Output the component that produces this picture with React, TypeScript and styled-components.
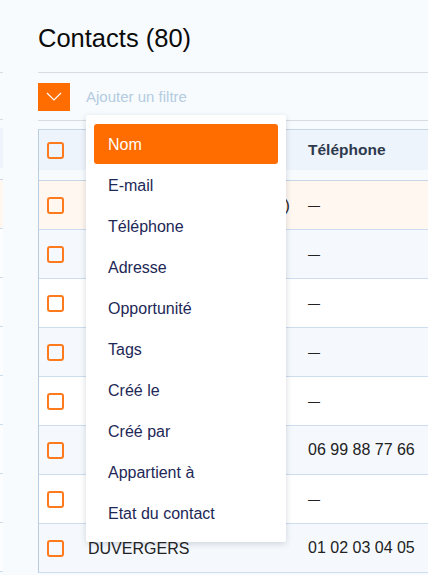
import styled, { createGlobalStyle } from "styled-components";

const GlobalStyle = createGlobalStyle`
  html, body {
    margin: 0;
    padding: 0;
    background: #f7fbfe;
    overflow: hidden;
  }
  body {
    font-family: "Liberation Sans", Arial, Helvetica, sans-serif;
  }
`;

const Page = styled.div`
  display: flex;
  gap: 35px;
  width: 428px;
  height: 575px;
  overflow: hidden;
`;

/* edge of the previous panel, mostly out of view */
const Stub = styled.div`
  width: 3px;
  flex: none;
  display: flex;
  flex-direction: column;
`;

const StubBand = styled.div<{ $h: number; $bg?: string; $line?: string }>`
  flex: none;
  height: ${(p) => p.$h}px;
  background: ${(p) => p.$bg || "transparent"};
  border-bottom: ${(p) => (p.$line ? `1px solid ${p.$line}` : "none")};
`;

const Main = styled.div`
  flex: none;
  width: 460px;
  display: flex;
  flex-direction: column;
`;

const Header = styled.div`
  box-sizing: border-box;
  height: 73px;
  padding-top: 23px;
  border-bottom: 1px solid #d6dce2;
`;

const Title = styled.h1`
  margin: 0;
  font-size: 25.5px;
  line-height: 30px;
  font-weight: 400;
  color: #0b0b0b;
`;

const FilterBar = styled.div`
  position: relative;
  box-sizing: border-box;
  height: 48px;
  display: flex;
  align-items: center;
  gap: 16px;
  border-bottom: 1px solid #d6dce2;
`;

const FilterButton = styled.button`
  width: 32px;
  height: 28px;
  padding: 0;
  border: none;
  background: #ff6d00;
  display: flex;
  align-items: center;
  justify-content: center;
`;

const FilterInput = styled.span`
  font-size: 15px;
  color: #b4cbe0;
`;

const Menu = styled.div`
  position: absolute;
  left: 48px;
  top: 42px;
  z-index: 5;
  width: 200px;
  box-sizing: border-box;
  padding: 9px 8px 8px;
  background: #ffffff;
  border-radius: 2px;
  box-shadow: 0 2px 6px rgba(40, 50, 70, 0.18);
`;

const MenuItem = styled.div<{ $active?: boolean }>`
  box-sizing: border-box;
  height: 40px;
  margin-bottom: 1px;
  padding: 2px 0 0 14px;
  display: flex;
  align-items: center;
  border-radius: 3px;
  font-size: 16px;
  color: ${(p) => (p.$active ? "#ffffff" : "#1d2856")};
  background: ${(p) => (p.$active ? "#ff6d00" : "transparent")};
`;

const Table = styled.div`
  margin-top: 8px;
  border-top: 1px solid #c6d6e8;
  border-left: 1px solid #b9cde0;
  display: flex;
  flex-direction: column;
`;

const HeadRow = styled.div`
  height: 40px;
  display: flex;
  align-items: center;
  background: #eef4fb;
`;

const HeadGap = styled.div`
  height: 10px;
  border-bottom: 1px solid #c6d6e8;
`;

const Row = styled.div<{ $tone: "hover" | "odd" | "even" }>`
  height: 48px;
  display: flex;
  align-items: center;
  border-bottom: 1px solid #cddcef;
  background: ${(p) =>
    p.$tone === "hover" ? "#fff7f0" : p.$tone === "even" ? "#f5f9fd" : "#ffffff"};
`;

const CheckCell = styled.div`
  width: 33px;
  flex: none;
  padding-left: 8px;
  box-sizing: border-box;
  display: flex;
`;

const Checkbox = styled.span`
  width: 17px;
  height: 17px;
  box-sizing: border-box;
  border: 2px solid #ff7a1c;
  border-radius: 3px;
`;

const NameCell = styled.div`
  width: 220px;
  flex: none;
  box-sizing: border-box;
  padding: 2px 0 0 16px;
  white-space: nowrap;
  font-size: 16px;
  color: #222222;
`;

const PhoneCell = styled.div<{ $head?: boolean }>`
  padding-left: 16px;
  white-space: nowrap;
  font-size: ${(p) => (p.$head ? "15.5px" : "16px")};
  font-weight: ${(p) => (p.$head ? 700 : 400)};
  color: ${(p) => (p.$head ? "#2e3a4e" : "#222222")};
`;

const Dash = styled.span`
  font-size: 12px;
`;

const filters = [
  "Nom",
  "E-mail",
  "Téléphone",
  "Adresse",
  "Opportunité",
  "Tags",
  "Créé le",
  "Créé par",
  "Appartient à",
  "Etat du contact",
];

const rows = [
  { name: "Cabinet Martin et Fils (2010)", phone: "" },
  { name: "", phone: "" },
  { name: "", phone: "" },
  { name: "", phone: "" },
  { name: "", phone: "" },
  { name: "", phone: "06 99 88 77 66" },
  { name: "", phone: "" },
  { name: "DUVERGERS", phone: "01 02 03 04 05" },
];

const Chevron = () => (
  <svg width="16" height="9" viewBox="0 0 16 9" fill="none">
    <path d="M1 1 L8 8 L15 1" stroke="#ffffff" strokeWidth="1.2" />
  </svg>
);

const App = () => {
  return (
    <>
      <GlobalStyle />
      <Page>
        <Stub>
          <StubBand $h={72} $line="#d6dce2" />
          <StubBand $h={46} $line="#d6dce2" />
          <StubBand $h={8} />
          <StubBand $h={40} $bg="#eef4fb" />
          <StubBand $h={11} $line="#c6d6e8" />
          <StubBand $h={48} $bg="#fff7f0" $line="#cddcef" />
          {[0, 1, 2, 3, 4, 5, 6].map((i) => (
            <StubBand key={i} $h={48} $bg="#fbfdff" $line="#cddcef" />
          ))}
        </Stub>
        <Main>
          <Header>
            <Title>Contacts (80)</Title>
          </Header>
          <FilterBar>
            <FilterButton>
              <Chevron />
            </FilterButton>
            <FilterInput>Ajouter un filtre</FilterInput>
            <Menu>
              {filters.map((f, i) => (
                <MenuItem key={f} $active={i === 0}>
                  {f}
                </MenuItem>
              ))}
            </Menu>
          </FilterBar>
          <Table>
            <HeadRow>
              <CheckCell>
                <Checkbox />
              </CheckCell>
              <NameCell />
              <PhoneCell $head>Téléphone</PhoneCell>
            </HeadRow>
            <HeadGap />
            {rows.map((r, i) => (
              <Row key={i} $tone={i === 0 ? "hover" : i % 2 === 1 ? "even" : "odd"}>
                <CheckCell>
                  <Checkbox />
                </CheckCell>
                <NameCell>{r.name}</NameCell>
                <PhoneCell>{r.phone || <Dash>—</Dash>}</PhoneCell>
              </Row>
            ))}
          </Table>
        </Main>
      </Page>
    </>
  );
};

export default App;
